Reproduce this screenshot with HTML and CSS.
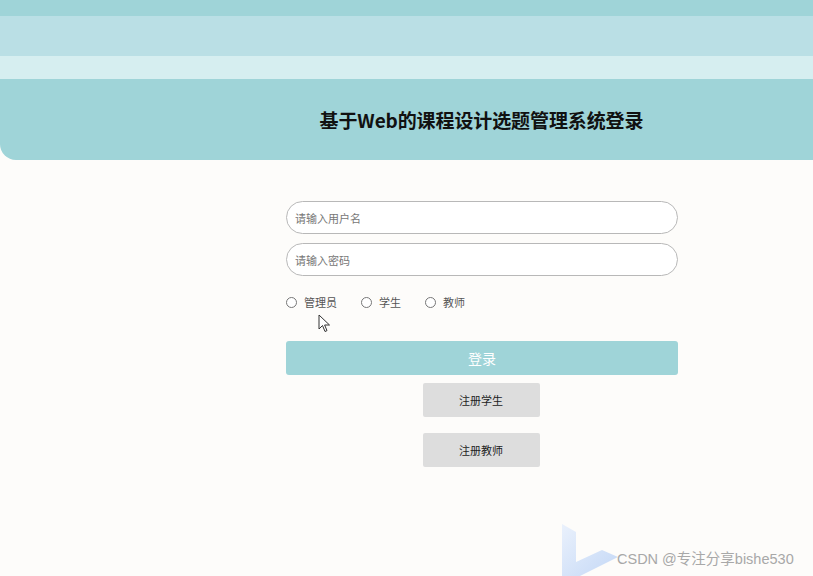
FILE: index.html
```html
<!DOCTYPE html>
<html lang="zh-CN">
<head>
  <meta charset="UTF-8">
  <meta name="viewport" content="width=device-width, initial-scale=1.0">
  <title>登录</title>
  <link rel="stylesheet" href="styles.css">
</head>
<body>
  <div class="stripe stripe-top"></div>
  <div class="stripe stripe-mid"></div>
  <div class="stripe stripe-light"></div>
  <header class="header">
    <h1>基于Web的课程设计选题管理系统登录</h1>
  </header>

  <main class="login">
    <form class="login-form" onsubmit="return false">
      <input class="field" type="text" placeholder="请输入用户名">
      <input class="field" type="password" placeholder="请输入密码">
      <div class="roles">
        <label class="role"><input type="radio" name="role"> 管理员</label>
        <label class="role"><input type="radio" name="role"> 学生</label>
        <label class="role"><input type="radio" name="role"> 教师</label>
      </div>
      <button class="btn-login" type="submit">登录</button>
      <button class="btn-reg" type="button">注册学生</button>
      <button class="btn-reg" type="button">注册教师</button>
    </form>
  </main>

  <!-- mouse pointer captured in the screenshot -->
  <svg class="cursor" width="14" height="20" viewBox="0 0 14 20">
    <path d="M1 1 L1 15 L4.5 11.5 L7 17.5 L9 16.6 L6.6 11 L11.5 11 Z" fill="#fff" stroke="#333" stroke-width="1"/>
  </svg>

  <div class="watermark">
    <svg class="wm-logo" width="56" height="52" viewBox="0 0 56 52">
      <defs>
        <linearGradient id="wm" x1="0" y1="0" x2="1" y2="1">
          <stop offset="0" stop-color="#eaf1fc"/>
          <stop offset="1" stop-color="#c4d8f6"/>
        </linearGradient>
      </defs>
      <path d="M0 0 L14 8 L14 38 L40 26 L56 33 L18 52 L0 52 Z" fill="url(#wm)"/>
    </svg>
    <span class="wm-text">CSDN @专注分享bishe530</span>
  </div>
</body>
</html>
```

FILE: styles.css
```css
body {
  margin: 0;
  background: #fdfcfa;
  font-family: "Noto Sans CJK SC", "Liberation Sans", sans-serif;
  color: #333;
  height: 576px;
  overflow: hidden;
  position: relative;
}

.stripe-top {
  height: 16px;
  background: #9fd4d8;
}

.stripe-mid {
  height: 40px;
  background: #badfe5;
}

.stripe-light {
  height: 23px;
  background: #d6eef0;
}

.header {
  height: 81px;
  background: #9fd4d8;
  border-bottom-left-radius: 16px;
  display: flex;
  align-items: center;
  justify-content: center;
  padding-left: 150px;
  box-sizing: border-box;
}

.header h1 {
  margin: 0;
  font-size: 19px;
  font-weight: 700;
  color: #111;
  letter-spacing: -0.1px;
}

.login {
  padding: 41px 0 0 286px;
}

.login-form {
  width: 392px;
  display: flex;
  flex-direction: column;
  align-items: center;
}

.field {
  width: 100%;
  height: 33px;
  box-sizing: border-box;
  border: 1px solid #b8b8b8;
  border-radius: 17px;
  padding: 0 8px;
  margin-bottom: 9px;
  font-family: inherit;
  font-size: 11px;
  background: #fff;
  outline: none;
}

.field::placeholder {
  color: #777;
}

.roles {
  align-self: flex-start;
  display: flex;
  gap: 24px;
  margin-top: 9px;
  font-size: 11px;
  color: #555;
}

.role {
  display: flex;
  align-items: center;
  gap: 7px;
}

.role input {
  margin: 0;
  width: 11px;
  height: 11px;
}

.btn-login {
  width: 100%;
  height: 34px;
  margin-top: 31px;
  border: none;
  border-radius: 3px;
  background: #9fd4d8;
  color: #fff;
  font-family: inherit;
  font-size: 14px;
}

.btn-reg {
  width: 117px;
  height: 34px;
  margin-top: 8px;
  margin-right: 2px;
  border: none;
  border-radius: 2px;
  background: #dddddd;
  color: #222;
  font-family: inherit;
  font-size: 11px;
}

.btn-reg + .btn-reg {
  margin-top: 16px;
}

.cursor {
  position: absolute;
  left: 318px;
  top: 314px;
}

.watermark {
  position: absolute;
  left: 562px;
  top: 524px;
  display: flex;
  align-items: flex-end;
}

.wm-logo {
  display: block;
}

.wm-text {
  margin: 0 0 8px -1px;
  font-size: 14.5px;
  color: #a8a8a8;
  font-family: "Liberation Sans", "Noto Sans CJK SC", sans-serif;
}
```
